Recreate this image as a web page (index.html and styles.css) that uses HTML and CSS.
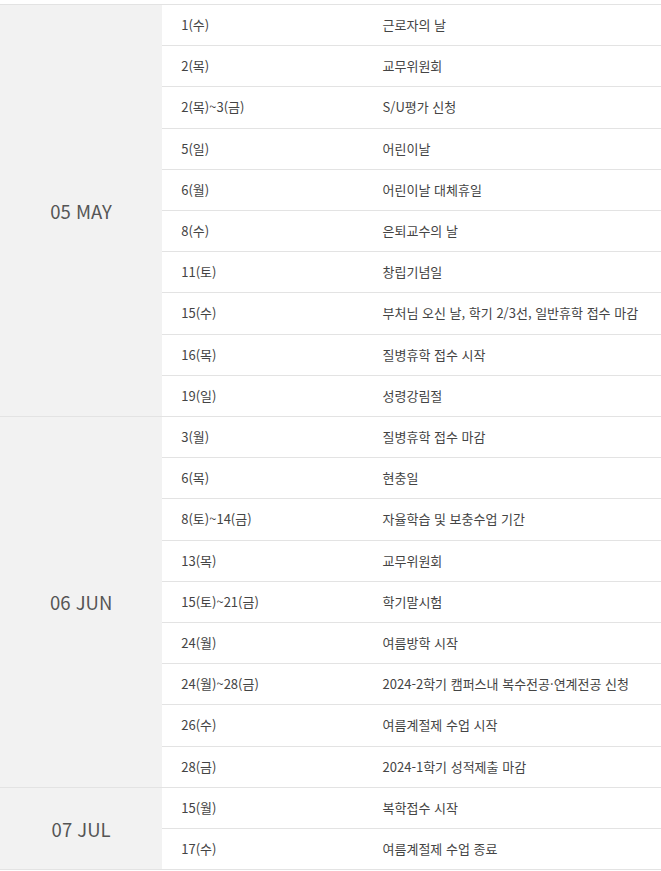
FILE: index.html
```html
<!DOCTYPE html>
<html lang="ko">
<head>
<meta charset="utf-8">
<link rel="stylesheet" href="styles.css">
</head>
<body>
<div class="wrap">
<table class="sched">
<tbody>
<tr><th class="month" rowspan="10">05 MAY</th><td class="date">1(수)</td><td class="event">근로자의 날</td></tr>
<tr><td class="date">2(목)</td><td class="event">교무위원회</td></tr>
<tr><td class="date">2(목)~3(금)</td><td class="event">S/U평가 신청</td></tr>
<tr><td class="date">5(일)</td><td class="event">어린이날</td></tr>
<tr><td class="date">6(월)</td><td class="event">어린이날 대체휴일</td></tr>
<tr><td class="date">8(수)</td><td class="event">은퇴교수의 날</td></tr>
<tr><td class="date">11(토)</td><td class="event">창립기념일</td></tr>
<tr><td class="date">15(수)</td><td class="event">부처님 오신 날, 학기 2/3선, 일반휴학 접수 마감</td></tr>
<tr><td class="date">16(목)</td><td class="event">질병휴학 접수 시작</td></tr>
<tr><td class="date">19(일)</td><td class="event">성령강림절</td></tr>
</tbody>
<tbody>
<tr><th class="month" rowspan="9">06 JUN</th><td class="date">3(월)</td><td class="event">질병휴학 접수 마감</td></tr>
<tr><td class="date">6(목)</td><td class="event">현충일</td></tr>
<tr><td class="date">8(토)~14(금)</td><td class="event">자율학습 및 보충수업 기간</td></tr>
<tr><td class="date">13(목)</td><td class="event">교무위원회</td></tr>
<tr><td class="date">15(토)~21(금)</td><td class="event">학기말시험</td></tr>
<tr><td class="date">24(월)</td><td class="event">여름방학 시작</td></tr>
<tr><td class="date">24(월)~28(금)</td><td class="event">2024-2학기 캠퍼스내 복수전공·연계전공 신청</td></tr>
<tr><td class="date">26(수)</td><td class="event">여름계절제 수업 시작</td></tr>
<tr><td class="date">28(금)</td><td class="event">2024-1학기 성적제출 마감</td></tr>
</tbody>
<tbody>
<tr><th class="month" rowspan="2">07 JUL</th><td class="date">15(월)</td><td class="event">복학접수 시작</td></tr>
<tr><td class="date">17(수)</td><td class="event">여름계절제 수업 종료</td></tr>
</tbody>
</table>
</div>
</body>
</html>
```

FILE: styles.css
```css
html, body {
  margin: 0;
  padding: 0;
  background: #fff;
}
.wrap {
  padding-top: 4px;
}
.sched {
  width: 661px;
  border-collapse: collapse;
  border-spacing: 0;
  table-layout: fixed;
  font-family: "Noto Sans CJK KR", "Noto Sans", sans-serif;
  font-size: 13px;
  color: #444;
  border-top: 1px solid #e3e3e3;
}
.month {
  width: 162px;
  background: #f2f2f2;
  font-weight: normal;
  font-size: 18.5px;
  color: #555;
  text-align: center;
  vertical-align: middle;
  border-bottom: 1px solid #e3e3e3;
  padding: 0;
}
.date,
.event {
  padding: 10px 0 10px 20px;
  line-height: 20.2px;
  border-bottom: 1px solid #e3e3e3;
  vertical-align: middle;
  white-space: nowrap;
}
.date {
  width: 181px;
  padding-left: 19px;
}
.event {
  width: 278px;
}
```
